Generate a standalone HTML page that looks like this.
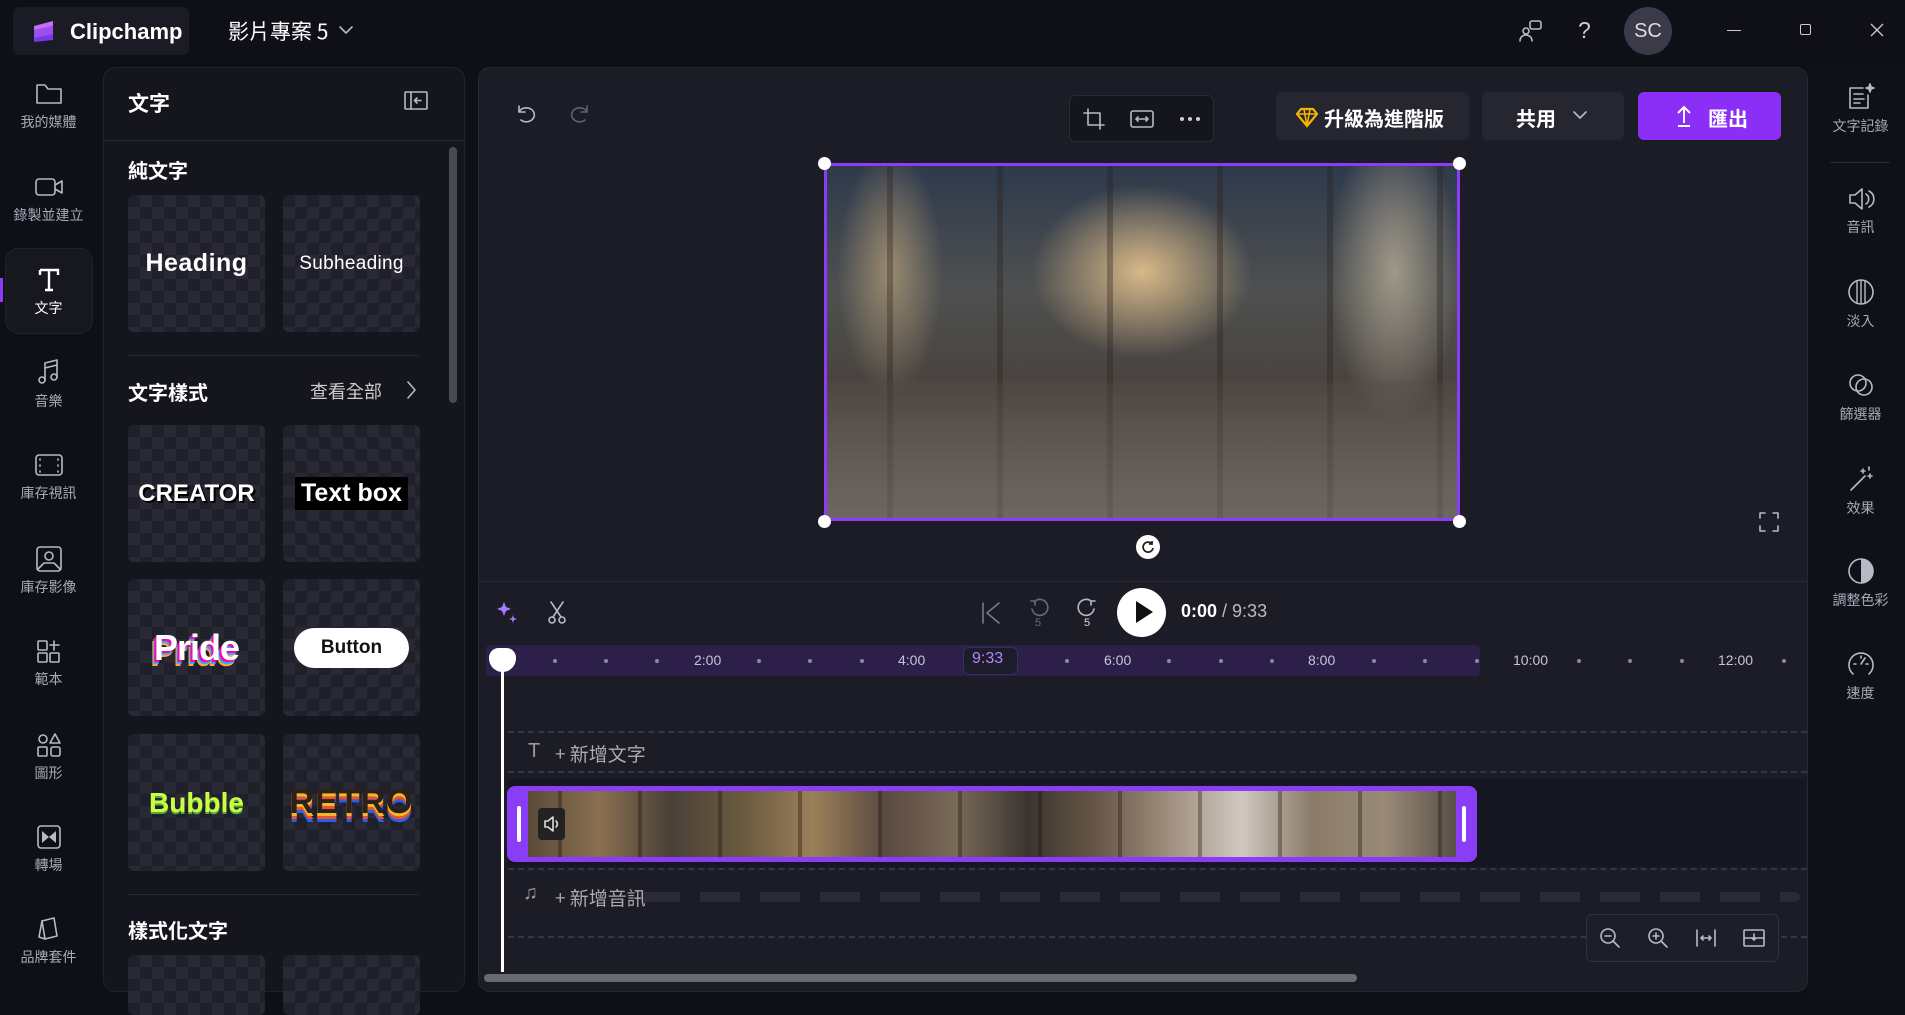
<!DOCTYPE html>
<html><head><meta charset="utf-8"><style>
*{margin:0;padding:0;box-sizing:border-box}
body{width:1905px;height:998px;background:#0f0f17;font-family:"Liberation Sans","Noto Sans CJK TC",sans-serif;color:#fff;position:relative;overflow:hidden}
.a{position:absolute}
.cjk{font-family:"Noto Sans CJK TC","Liberation Sans",sans-serif}
.rail{color:#a9a9b8;font-size:14px;text-align:center;width:97px}
.rail svg{display:block;margin:0 auto 4px}
.tile{position:absolute;width:137px;height:137px;border-radius:6px;background-color:#20202b;background-image:linear-gradient(45deg,#292936 25%,transparent 25%,transparent 75%,#292936 75%),linear-gradient(45deg,#292936 25%,transparent 25%,transparent 75%,#292936 75%);background-size:24px 24px;background-position:0 0,12px 12px;display:flex;align-items:center;justify-content:center}
.ic{stroke:#b9b9c6;fill:none;stroke-width:1.6;stroke-linecap:round;stroke-linejoin:round}
.tick{position:absolute;top:659px;width:4px;height:4px;border-radius:2px;background:#8c85a8}
.tl{position:absolute;top:652px;font-size:14px;color:#c8c4d8}
.dash{position:absolute;left:508px;right:98px;border-top:2px dashed #35354a}
</style></head><body>
<!-- top bar -->
<div class="a" style="left:13px;top:7px;width:176px;height:48px;background:#1b1b25;border-radius:6px"></div>
<svg class="a" style="left:31px;top:18px" width="26" height="26" viewBox="0 0 26 26"><path d="M3 8 L22 3 L22 8 L3 13Z" fill="#c66cf5"/><path d="M3 12 L22 8 L22 17 L3 22Z" fill="#9b4ff0"/><path d="M3 20 L22 16 L22 22 L3 24Z" fill="#7a37e6"/></svg>
<div class="a" style="left:70px;top:19px;font-size:22px;font-weight:bold">Clipchamp</div>
<div class="a cjk" style="left:228px;top:16px;font-size:21px">影片專案 5</div>
<svg class="a" style="left:338px;top:24px" width="16" height="12"><path d="M2 3 L8 9 L14 3" class="ic" stroke="#ddd"/></svg>
<svg class="a ic" style="left:1518px;top:18px" width="26" height="26" viewBox="0 0 26 26"><rect x="12" y="3" width="11" height="8" rx="2"/><circle cx="8" cy="13" r="3"/><path d="M2 23c0-4 3-6 6-6s6 2 6 6"/></svg>
<div class="a" style="left:1578px;top:17px;font-size:23px;color:#ccc">?</div>
<div class="a" style="left:1624px;top:7px;width:48px;height:48px;border-radius:24px;background:#3a3a48;font-size:20px;text-align:center;line-height:48px;color:#ddd">SC</div>
<div class="a" style="left:1727px;top:30px;width:14px;height:1px;background:#ccc"></div>
<div class="a" style="left:1800px;top:24px;width:11px;height:11px;border:1px solid #ccc;border-radius:2px"></div>
<svg class="a" style="left:1870px;top:23px" width="14" height="14"><path d="M1 1L13 13M13 1L1 13" stroke="#ccc" stroke-width="1.3"/></svg>

<!-- left rail -->
<div class="a" style="left:5px;top:248px;width:88px;height:86px;background:#17171f;border:1px solid #22222c;border-radius:14px"></div>
<div class="a" style="left:0;top:278px;width:3px;height:24px;background:#8b3cf7"></div>
<div class="a rail cjk" style="left:0;top:80px"><svg class="ic" width="30" height="28" viewBox="0 0 30 28"><path d="M3 6v17h24V9H14l-3-4H3z"/></svg>我的媒體</div>
<div class="a rail cjk" style="left:0;top:173px"><svg class="ic" width="32" height="28" viewBox="0 0 32 28"><rect x="3" y="6" width="19" height="16" rx="3"/><path d="M22 12l7-4v12l-7-4"/></svg>錄製並建立</div>
<div class="a rail cjk" style="left:0;top:266px;color:#fff"><svg width="30" height="28" viewBox="0 0 30 28"><path d="M6 4h18v5M15 4v20M11 24h8M6 4v5" stroke="#fff" stroke-width="2.4" fill="none"/></svg>文字</div>
<div class="a rail cjk" style="left:0;top:357px"><svg class="ic" width="30" height="30" viewBox="0 0 30 30"><path d="M11 23V6l12-3v17"/><circle cx="8" cy="23" r="3"/><circle cx="20" cy="20" r="3"/><path d="M11 11l12-3"/></svg>音樂</div>
<div class="a rail cjk" style="left:0;top:451px"><svg class="ic" width="32" height="28" viewBox="0 0 32 28"><rect x="3" y="4" width="26" height="20" rx="3"/><path d="M7 8v1M7 14v1M7 20v1M25 8v1M25 14v1M25 20v1"/></svg>庫存視訊</div>
<div class="a rail cjk" style="left:0;top:545px"><svg class="ic" width="30" height="28" viewBox="0 0 30 28"><rect x="3" y="2" width="24" height="24" rx="3"/><circle cx="15" cy="11" r="4"/><path d="M4 24l6-6h10l6 6"/></svg>庫存影像</div>
<div class="a rail cjk" style="left:0;top:637px"><svg class="ic" width="30" height="28" viewBox="0 0 30 28"><rect x="4" y="4" width="9" height="9" rx="1"/><rect x="4" y="16" width="9" height="9" rx="1"/><rect x="16" y="16" width="9" height="9" rx="1"/><path d="M16 8h9M20 4v9"/></svg>範本</div>
<div class="a rail cjk" style="left:0;top:731px"><svg class="ic" width="30" height="28" viewBox="0 0 30 28"><circle cx="9" cy="8" r="4"/><path d="M21 3l5 9h-10z"/><rect x="4" y="16" width="9" height="9" rx="1"/><rect x="17" y="16" width="9" height="9" rx="2"/></svg>圖形</div>
<div class="a rail cjk" style="left:0;top:823px"><svg width="30" height="28" viewBox="0 0 30 28"><rect x="4" y="3" width="22" height="22" rx="3" fill="none" stroke="#b9b9c6" stroke-width="1.6"/><path d="M8 8l7 6-7 6zM22 8l-7 6 7 6z" fill="#b9b9c6"/></svg>轉場</div>
<div class="a rail cjk" style="left:0;top:915px"><svg class="ic" width="30" height="28" viewBox="0 0 30 28"><path d="M8 6l12-3 3 18-12 3z"/><path d="M8 6l-3 16 6 2"/></svg>品牌套件</div>

<!-- panel -->
<div class="a" style="left:103px;top:67px;width:362px;height:925px;background:#15151e;border:1px solid #22222c;border-radius:12px"></div>
<div class="a cjk" style="left:128px;top:88px;font-size:21px;font-weight:bold">文字</div>
<svg class="a ic" style="left:404px;top:91px" width="24" height="20" viewBox="0 0 24 20"><rect x="1" y="1" width="22" height="17" rx="1"/><path d="M7 1v17M17 9.5h-6M13 7l-2.5 2.5L13 12"/></svg>
<div class="a" style="left:104px;top:140px;width:360px;height:1px;background:#2a2a35"></div>
<div class="a" style="left:449px;top:147px;width:8px;height:256px;border-radius:4px;background:#4a4a55"></div>
<div class="a cjk" style="left:128px;top:155px;font-size:20px;font-weight:bold">純文字</div>
<div class="tile" style="left:128px;top:195px"><span style="font-size:25px;font-weight:bold;letter-spacing:.5px">Heading</span></div>
<div class="tile" style="left:283px;top:195px"><span style="font-size:19px;letter-spacing:.3px">Subheading</span></div>
<div class="a" style="left:128px;top:355px;width:291px;height:1px;background:#2a2a35"></div>
<div class="a cjk" style="left:128px;top:377px;font-size:20px;font-weight:bold">文字樣式</div>
<div class="a cjk" style="left:310px;top:378px;font-size:18px;color:#ccc">查看全部</div>
<svg class="a" style="left:405px;top:380px" width="12" height="20"><path d="M3 2l7 8-7 8" class="ic" stroke="#ddd"/></svg>
<div class="tile" style="left:128px;top:425px"><span style="font-size:24px;font-weight:900;text-shadow:1px 1px 0 #000,2px 2px 0 #000">CREATOR</span></div>
<div class="tile" style="left:283px;top:425px"><span style="font-size:25px;font-weight:bold;background:#000;padding:2px 6px">Text box</span></div>
<div class="tile" style="left:128px;top:579px"><span style="font-size:36px;font-weight:900;letter-spacing:-1px;text-shadow:-2px 2px 0 #f0a,-3px 4px 0 #3af,-4px 6px 0 #fa3">Pride</span></div>
<div class="tile" style="left:283px;top:579px"><span style="font-size:19px;font-weight:bold;background:#fff;color:#111;padding:9px 27px;border-radius:20px">Button</span></div>
<div class="tile" style="left:128px;top:734px"><span style="font-size:28px;font-weight:900;color:#c8ff44;text-shadow:0 2px 0 #5a3">Bubble</span></div>
<div class="tile" style="left:283px;top:734px"><span style="font-size:34px;font-weight:900;color:#2a2118;letter-spacing:1px;text-shadow:0 3px 0 #f6b62b,0 6px 0 #e8542a,0 9px 0 #2a5fe8">RETRO</span></div>
<div class="a" style="left:128px;top:894px;width:291px;height:1px;background:#2a2a35"></div>
<div class="a cjk" style="left:128px;top:915px;font-size:20px;font-weight:bold">樣式化文字</div>
<div class="tile" style="left:128px;top:955px;height:60px"></div>
<div class="tile" style="left:283px;top:955px;height:60px"></div>

<!-- editor -->
<div class="a" style="left:478px;top:67px;width:1330px;height:925px;background:#1c1c27;border:1px solid #272733;border-radius:12px"></div>
<div class="a" style="left:1808px;top:67px;width:97px;height:931px;background:#101018"></div>
<svg class="a ic" style="left:514px;top:102px" width="24" height="22" viewBox="0 0 24 22"><path d="M5 4v6h6M5 10a8 7 0 1 1 2 8"/></svg>
<svg class="a ic" style="left:568px;top:102px;opacity:.45" width="24" height="22" viewBox="0 0 24 22"><path d="M19 4v6h-6M19 10a8 7 0 1 0-2 8"/></svg>
<div class="a" style="left:1069px;top:95px;width:145px;height:47px;background:#15151e;border:1px solid #2a2a35;border-radius:6px"></div>
<svg class="a ic" style="left:1082px;top:107px" width="24" height="24" viewBox="0 0 24 24"><path d="M6 2v16h16M2 6h16v16"/></svg>
<svg class="a ic" style="left:1129px;top:107px" width="26" height="24" viewBox="0 0 26 24"><rect x="2" y="4" width="22" height="16" rx="2"/><path d="M7 12h12M9 10l-2 2 2 2M17 10l2 2-2 2"/></svg>
<svg class="a" style="left:1179px;top:116px" width="22" height="6"><circle cx="3" cy="3" r="2" fill="#ccc"/><circle cx="11" cy="3" r="2" fill="#ccc"/><circle cx="19" cy="3" r="2" fill="#ccc"/></svg>
<div class="a" style="left:1276px;top:92px;width:193px;height:48px;background:#262631;border-radius:6px"></div>
<svg class="a" style="left:1296px;top:106px" width="22" height="22" viewBox="0 0 22 22"><path d="M5 3h12l4 5-10 12L1 8z" fill="none" stroke="#f7b500" stroke-width="2.2"/><path d="M1 8h20M8 3l3 17 3-17" fill="none" stroke="#f7b500" stroke-width="1.6"/></svg>
<div class="a cjk" style="left:1324px;top:103px;font-size:20px;font-weight:bold">升級為進階版</div>
<div class="a" style="left:1482px;top:92px;width:142px;height:48px;background:#262631;border-radius:6px"></div>
<div class="a cjk" style="left:1516px;top:103px;font-size:20px;font-weight:bold">共用</div>
<svg class="a" style="left:1572px;top:110px" width="16" height="12"><path d="M2 2l6 6 6-6" class="ic" stroke="#fff" stroke-width="2"/></svg>
<div class="a" style="left:1638px;top:92px;width:143px;height:48px;background:#8b2ff7;border-radius:6px"></div>
<svg class="a" style="left:1676px;top:104px" width="16" height="24"><path d="M8 19V3M2 9l6-6 6 6M2 22h12" stroke="#fff" stroke-width="2" fill="none"/></svg>
<div class="a cjk" style="left:1708px;top:103px;font-size:20px;font-weight:bold">匯出</div>

<!-- preview -->
<div class="a" style="left:824px;top:163px;width:636px;height:358px;border:3px solid #8b3cf7;overflow:hidden;background:
radial-gradient(ellipse 25% 35% at 50% 30%,#d8b888 0%,transparent 70%),
radial-gradient(ellipse 12% 50% at 10% 30%,#9a8a70 0%,transparent 70%),
radial-gradient(ellipse 15% 60% at 90% 30%,#a09888 0%,transparent 70%),
linear-gradient(#2e3a4c 0%,#4e5050 35%,#4a4440 60%,#6a6460 100%)">
<div class="a" style="left:0;top:0;width:100%;height:100%;background:repeating-linear-gradient(90deg,transparent 0 60px,rgba(40,30,25,.35) 60px 66px,transparent 66px 110px)"></div>
<div class="a" style="left:0;top:215px;width:100%;height:140px;background:linear-gradient(rgba(80,72,70,.3),rgba(110,105,100,.6))"></div>
</div>
<div class="a" style="left:818px;top:157px;width:13px;height:13px;border-radius:7px;background:#fff"></div>
<div class="a" style="left:1453px;top:157px;width:13px;height:13px;border-radius:7px;background:#fff"></div>
<div class="a" style="left:818px;top:515px;width:13px;height:13px;border-radius:7px;background:#fff"></div>
<div class="a" style="left:1453px;top:515px;width:13px;height:13px;border-radius:7px;background:#fff"></div>
<div class="a" style="left:1136px;top:535px;width:24px;height:24px;border-radius:12px;background:#fff"></div>
<svg class="a" style="left:1141px;top:540px" width="14" height="14" viewBox="0 0 14 14"><path d="M11 4A5 5 0 1 0 12 8M11 1v3h-3" stroke="#222" stroke-width="1.8" fill="none"/></svg>
<svg class="a ic" style="left:1758px;top:511px" width="22" height="22" viewBox="0 0 22 22"><path d="M2 7V2h5M15 2h5v5M20 15v5h-5M7 20H2v-5"/></svg>
<div class="a" style="left:479px;top:581px;width:1328px;height:1px;background:#2a2a36"></div>

<!-- playback -->
<svg class="a" style="left:496px;top:600px" width="24" height="26" viewBox="0 0 24 26"><path d="M8 2l2 5 5 2-5 2-2 5-2-5-5-2 5-2z" fill="#a77bff"/><path d="M17 15l1 3 3 1-3 1-1 3-1-3-3-1 3-1z" fill="#a77bff"/></svg>
<svg class="a ic" style="left:546px;top:600px" width="22" height="26" viewBox="0 0 22 26"><circle cx="6" cy="20" r="3"/><circle cx="16" cy="20" r="3"/><path d="M7 17L17 2M15 17L5 2"/></svg>
<svg class="a ic" style="left:980px;top:601px;opacity:.6" width="22" height="24" viewBox="0 0 22 24"><path d="M3 2v20M19 2L7 12l12 10"/></svg>
<svg class="a ic" style="left:1027px;top:598px;opacity:.5" width="24" height="30" viewBox="0 0 24 30"><path d="M8 3a8 8 0 1 1-3 8M8 3h-4M8 3v4"/><text x="8" y="28" font-size="11" fill="#b9b9c6" stroke="none" font-family="Liberation Sans">5</text></svg>
<svg class="a ic" style="left:1075px;top:598px" width="24" height="30" viewBox="0 0 24 30"><path d="M16 3a8 8 0 1 0 3 8M16 3h4M16 3v4"/><text x="9" y="28" font-size="11" fill="#ddd" stroke="none" font-family="Liberation Sans">5</text></svg>
<div class="a" style="left:1117px;top:588px;width:49px;height:49px;border-radius:25px;background:#fff"></div>
<svg class="a" style="left:1134px;top:600px" width="20" height="24"><path d="M2 1l17 11L2 23z" fill="#111"/></svg>
<div class="a" style="left:1181px;top:601px;font-size:18px"><b>0:00</b> <span style="color:#bbb">/ 9:33</span></div>

<!-- ruler -->
<div class="a" style="left:486px;top:645px;width:994px;height:31px;background:#2c1f4a;border-radius:4px"></div>
<div class="a" style="left:963px;top:647px;width:55px;height:28px;background:#1c1c2a;border:1px solid #3a2e5c;border-radius:6px"></div>
<div class="tl" style="left:972px;color:#b783ff;font-size:16px;top:650px">9:33</div>
<div class="tl" style="left:694px">2:00</div><div class="tl" style="left:898px">4:00</div><div class="tl" style="left:1104px">6:00</div><div class="tl" style="left:1308px">8:00</div><div class="tl" style="left:1513px">10:00</div><div class="tl" style="left:1718px">12:00</div>
<div class="tick" style="left:553px"></div><div class="tick" style="left:604px"></div><div class="tick" style="left:655px"></div><div class="tick" style="left:757px"></div><div class="tick" style="left:808px"></div><div class="tick" style="left:860px"></div><div class="tick" style="left:1065px"></div><div class="tick" style="left:1167px"></div><div class="tick" style="left:1219px"></div><div class="tick" style="left:1270px"></div><div class="tick" style="left:1372px"></div><div class="tick" style="left:1423px"></div><div class="tick" style="left:1475px"></div><div class="tick" style="left:1577px"></div><div class="tick" style="left:1628px"></div><div class="tick" style="left:1680px"></div><div class="tick" style="left:1782px"></div>
<!-- tracks -->
<div class="dash" style="top:731px"></div>
<div class="dash" style="top:771px"></div>
<div class="a" style="left:528px;top:740px;font-size:20px;color:#999">T</div>
<div class="a cjk" style="left:555px;top:740px;font-size:19px;color:#aaa">+ 新增文字</div>
<div class="a" style="left:508px;top:779px;width:1298px;height:88px;background:#161620"></div>
<div class="a" style="left:507px;top:786px;width:970px;height:76px;border-radius:8px;background:#8b3cf7"></div>
<div class="a" style="left:528px;top:791px;width:928px;height:66px;background:linear-gradient(90deg,#5a4a3a,#8a7050,#4a4038,#6a5a40,#9a8058,#5a4a40,#7a6a58,#3a3530,#6a5848,#a09080,#d0c8c0,#8a7a68,#9a8a78,#5a5048)"></div>
<div class="a" style="left:528px;top:791px;width:928px;height:66px;background:repeating-linear-gradient(90deg,transparent 0 30px,rgba(20,15,10,.35) 30px 34px,transparent 34px 80px)"></div>
<div class="a" style="left:517px;top:806px;width:4px;height:36px;background:#fff;border-radius:2px"></div>
<div class="a" style="left:1462px;top:806px;width:4px;height:36px;background:#fff;border-radius:2px"></div>
<div class="a" style="left:538px;top:808px;width:27px;height:32px;background:#222;border-radius:4px"></div>
<svg class="a ic" style="left:542px;top:814px" width="20" height="20" viewBox="0 0 20 20"><path d="M3 7h3l5-4v14l-5-4H3zM14 7a4 4 0 0 1 0 6" stroke="#ddd"/></svg>
<div class="dash" style="top:868px"></div>
<div class="dash" style="top:936px"></div>
<div class="a" style="left:640px;top:892px;width:1160px;height:10px;background:repeating-linear-gradient(90deg,#2e2e3c 0 40px,transparent 40px 60px);opacity:.8;border-radius:5px"></div>
<div class="a" style="left:523px;top:882px;font-size:20px;color:#999">♫</div>
<div class="a cjk" style="left:555px;top:884px;font-size:19px;color:#aaa">+ 新增音訊</div>
<div class="a" style="left:1586px;top:914px;width:193px;height:48px;background:#1e1e2a;border:1px solid #30303e;border-radius:6px"></div>
<svg class="a ic" style="left:1598px;top:926px" width="24" height="24" viewBox="0 0 24 24"><circle cx="10" cy="10" r="7"/><path d="M15 15l6 6M7 10h6"/></svg>
<svg class="a ic" style="left:1646px;top:926px" width="24" height="24" viewBox="0 0 24 24"><circle cx="10" cy="10" r="7"/><path d="M15 15l6 6M7 10h6M10 7v6"/></svg>
<svg class="a ic" style="left:1694px;top:926px" width="24" height="24" viewBox="0 0 24 24"><path d="M3 4v16M21 4v16M7 12h10M9 10l-2 2 2 2M15 10l2 2-2 2"/></svg>
<svg class="a ic" style="left:1742px;top:926px" width="24" height="24" viewBox="0 0 24 24"><rect x="2" y="4" width="20" height="16" rx="1"/><path d="M2 12h20M12 8v6M10 12l2 2 2-2"/></svg>
<div class="a" style="left:484px;top:974px;width:873px;height:8px;border-radius:4px;background:#6a6a72"></div>
<!-- playhead -->
<div class="a" style="left:501px;top:660px;width:3px;height:312px;background:#fff"></div>
<div class="a" style="left:489px;top:648px;width:27px;height:24px;background:#fff;border-radius:10px 10px 14px 14px"></div>

<!-- right rail -->
<div class="a rail cjk" style="left:1812px;top:82px"><svg class="ic" width="30" height="30" viewBox="0 0 30 30"><path d="M22 13v13H4V6h13M8 12h9M8 17h10M8 21h6"/><path d="M24 2l1 3 3 1-3 1-1 3-1-3-3-1 3-1z" fill="#b9b9c6"/></svg>文字記錄</div>
<div class="a" style="left:1830px;top:162px;width:60px;height:1px;background:#2a2a36"></div>
<div class="a rail cjk" style="left:1812px;top:185px"><svg class="ic" width="30" height="28" viewBox="0 0 30 28"><path d="M4 10h5l7-6v20l-7-6H4zM20 9a6 6 0 0 1 0 10M23 6a9 9 0 0 1 0 16"/></svg>音訊</div>
<div class="a rail cjk" style="left:1812px;top:277px"><svg width="30" height="30" viewBox="0 0 30 30"><circle cx="15" cy="15" r="12" fill="none" stroke="#b9b9c6" stroke-width="1.6"/><path d="M15 3v24M11 4v22M19 4v22" stroke="#b9b9c6" stroke-width="1.4"/></svg>淡入</div>
<div class="a rail cjk" style="left:1812px;top:370px"><svg class="ic" width="30" height="30" viewBox="0 0 30 30"><circle cx="12" cy="13" r="8"/><circle cx="18" cy="17" r="8"/></svg>篩選器</div>
<div class="a rail cjk" style="left:1812px;top:464px"><svg class="ic" width="30" height="30" viewBox="0 0 30 30"><path d="M5 26L19 12M17 5v4M15 7h4M24 10v4M22 12h4M23 3v3"/></svg>效果</div>
<div class="a rail cjk" style="left:1812px;top:556px"><svg width="30" height="30" viewBox="0 0 30 30"><circle cx="15" cy="15" r="12" fill="none" stroke="#b9b9c6" stroke-width="1.6"/><path d="M15 3a12 12 0 0 1 0 24z" fill="#b9b9c6"/></svg>調整色彩</div>
<div class="a rail cjk" style="left:1812px;top:649px"><svg class="ic" width="30" height="30" viewBox="0 0 30 30"><path d="M7 25a12 12 0 1 1 16 0"/><path d="M15 15l4-6M8 15h2M20 15h2M15 7v2"/></svg>速度</div>
</body></html>
